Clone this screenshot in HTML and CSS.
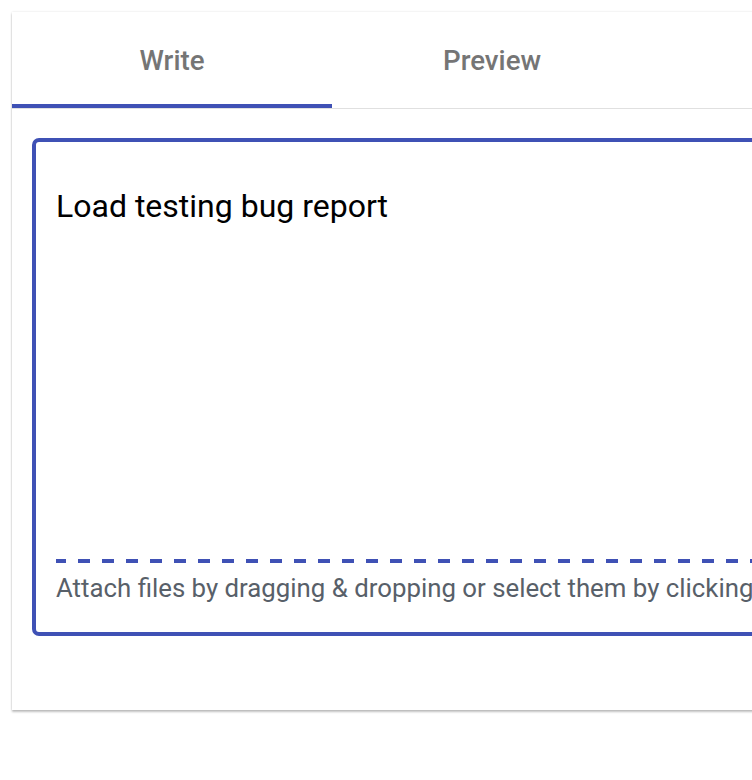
FILE: index.html
```html
<!DOCTYPE html>
<html>
<head>
<meta charset="utf-8">
<link rel="stylesheet" href="styles.css">
</head>
<body>
<div class="card">
  <div class="tabs">
    <div class="tab active">Write</div>
    <div class="tab">Preview</div>
  </div>
  <div class="body">
    <div class="editor">
      <div class="text">Load testing bug report</div>
      <div class="dash"></div>
      <div class="hint">Attach files by dragging &amp; dropping or select them by clicking</div>
    </div>
  </div>
</div>
</body>
</html>
```
FILE: styles.css
```css
html { overflow: hidden; background: #fff; }
body { margin: 0; padding: 12px 0 20px 12px; font-family: Roboto, "Liberation Sans", sans-serif; }
.card {
  width: 1000px;
  height: 698px;
  background: #fff;
  box-shadow: 0 2px 2px rgba(0,0,0,0.24), 0 0 2px rgba(0,0,0,0.12);
}
.tabs {
  display: flex;
  border-bottom: 1px solid #e0e0e0;
}
.tab {
  width: 320px;
  height: 96px;
  box-sizing: border-box;
  display: flex;
  align-items: center;
  justify-content: center;
  font-size: 27.7px;
  font-weight: 500;
  color: #757575;
  border-bottom: 4px solid transparent;
  padding-top: 4px;
}
.tab.active { border-bottom-color: #3f51b5; }
.body { padding: 29px 0 0 20px; }
.editor {
  border: 4px solid #3f51b5;
  border-radius: 7px;
  box-sizing: border-box;
  height: 498px;
  display: flex;
  flex-direction: column;
  padding: 0 0 0 20px;
}
.text {
  font-size: 32px;
  color: #000;
  margin-top: 44px;
  line-height: 40px;
  flex: 1;
}
.dash {
  height: 4px;
  background: repeating-linear-gradient(90deg, #3f51b5 0 12px, transparent 12px 24px);
  background-position: -2px 0;
}
.hint {
  font-size: 25.8px;
  color: #586069;
  line-height: 32px;
  margin: 9px 0 28px;
  white-space: nowrap;
}
```
